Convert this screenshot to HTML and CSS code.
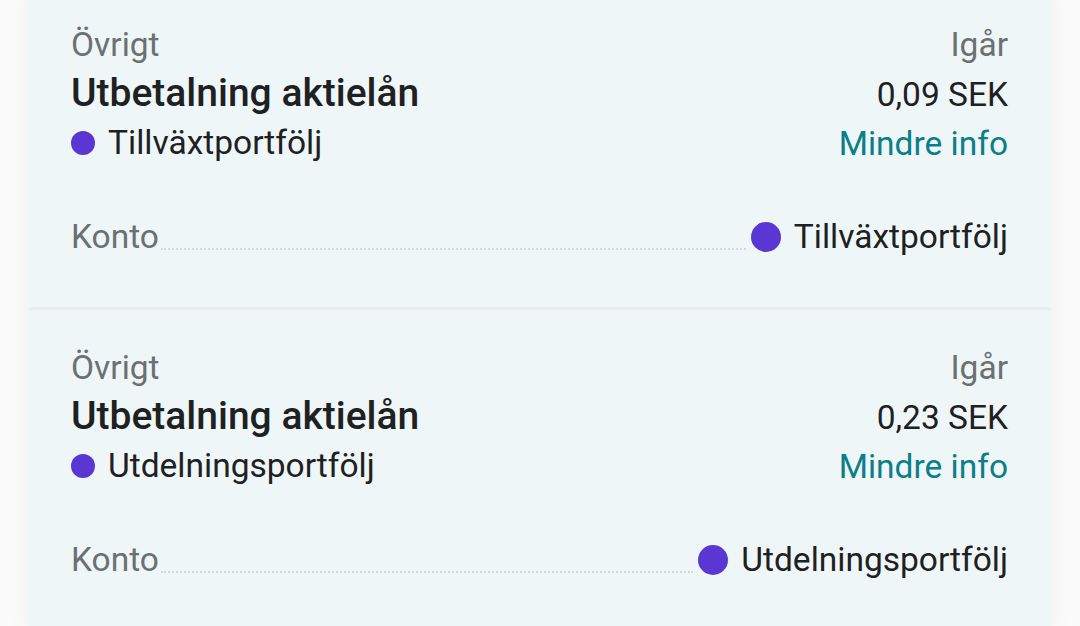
FILE: index.html
```html
<!DOCTYPE html>
<html lang="sv">
<head>
<meta charset="utf-8">
<link rel="stylesheet" href="styles.css">
</head>
<body>
<div class="list">
  <div class="card">
    <div class="row">
      <span class="muted">Övrigt</span>
      <span class="muted">Igår</span>
    </div>
    <div class="row">
      <span class="title">Utbetalning aktielån</span>
      <span class="amount">0,09 SEK</span>
    </div>
    <div class="row">
      <span class="account"><span class="dot"></span>Tillväxtportfölj</span>
      <span class="link">Mindre info</span>
    </div>
    <div class="detail">
      <span class="muted">Konto</span>
      <span class="leader"></span>
      <span class="account"><span class="dot dot-lg"></span>Tillväxtportfölj</span>
    </div>
  </div>
  <div class="card">
    <div class="row">
      <span class="muted">Övrigt</span>
      <span class="muted">Igår</span>
    </div>
    <div class="row">
      <span class="title">Utbetalning aktielån</span>
      <span class="amount">0,23 SEK</span>
    </div>
    <div class="row">
      <span class="account"><span class="dot"></span>Utdelningsportfölj</span>
      <span class="link">Mindre info</span>
    </div>
    <div class="detail">
      <span class="muted">Konto</span>
      <span class="leader"></span>
      <span class="account"><span class="dot dot-lg"></span>Utdelningsportfölj</span>
    </div>
  </div>
</div>
</body>
</html>
```
FILE: styles.css
```css
html, body {
  margin: 0;
  padding: 0;
  height: 100%;
  overflow: hidden;
}
body {
  background: #fbfbfb;
  font-family: Roboto, "Noto Sans", sans-serif;
  font-size: 33.5px;
  color: #1e2122;
}
.list {
  margin: -13px 29px 0;
  box-shadow: 0 0 22px rgba(0, 0, 0, 0.06);
}
.card {
  background: #eff6f8;
  padding: 33px 43px 46px 42px;
  border-bottom: 3px solid #e8ecec;
}
.row {
  display: flex;
  justify-content: space-between;
  align-items: baseline;
  height: 49px;
  line-height: 49px;
}
.muted {
  color: #6b7071;
}
.title {
  font-weight: 500;
  font-size: 39px;
  color: #1e2122;
}
.amount {
  color: #1e2122;
}
.link {
  color: #0b7f88;
}
.account {
  display: flex;
  align-items: center;
}
.dot {
  width: 24px;
  height: 24px;
  border-radius: 50%;
  background: #5a36d2;
  margin-right: 13px;
  flex: none;
}
.dot-lg {
  width: 30px;
  height: 30px;
}
.detail {
  display: flex;
  align-items: baseline;
  margin-top: 46px;
  height: 48px;
  line-height: 48px;
}
.leader {
  flex: 1;
  height: 0;
  border-bottom: 2px dotted #d3d9db;
  margin: 0 5px 0 2px;
  transform: translateY(2px);
}
.detail .account {
  align-self: center;
}
```
